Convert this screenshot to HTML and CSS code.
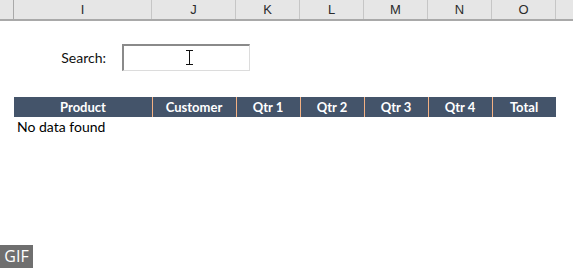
FILE: index.html
```html
<!DOCTYPE html>
<html lang="en">

<head>
    <meta charset="UTF-8">
    <meta name="viewport" content="width=device-width, initial-scale=1.0">
    <title>Search table</title>
    <link rel="stylesheet" href="styles.css">
</head>

<body>

    <div class="col-heads">
        <div class="corner"></div>
        <div>I</div>
        <div>J</div>
        <div>K</div>
        <div>L</div>
        <div>M</div>
        <div>N</div>
        <div>O</div>
        <div></div>
    </div>

    <div class="search-row">
        <label class="search-label" for="search">Search:</label>
        <div class="search-box">
            <input id="search" type="text">
            <span class="ibeam"></span>
        </div>
    </div>

    <div class="table-head">
        <div class="gap"></div>
        <div>Product</div>
        <div>Customer</div>
        <div>Qtr 1</div>
        <div>Qtr 2</div>
        <div>Qtr 3</div>
        <div>Qtr 4</div>
        <div>Total</div>
    </div>
    <p class="empty">No data found</p>

    <div class="gif-badge">GIF</div>

</body>

</html>
```

FILE: styles.css
```css
body {
    margin: 0;
    font-family: Lato, "Open Sans", sans-serif;
    background: #fff;
    color: #000;
    width: 573px;
    height: 271px;
    overflow: hidden;
    position: relative;
}

.col-heads,
.table-head {
    display: grid;
    grid-template-columns: 14px 138px 84px 64px 64px 64px 64px 64px 17px;
}

.col-heads {
    height: 19px;
    background: #e6e6e6;
    border-bottom: 2px solid #a9a9a9;
}

.col-heads div {
    border-right: 1px solid #c6c6c6;
    font-family: "Liberation Sans", sans-serif;
    font-size: 13px;
    line-height: 19px;
    text-align: center;
    color: #2b2b2b;
}

.col-heads .corner {
    border-right-color: #a9a9a9;
}

.col-heads div:last-child {
    border-right: none;
}

.search-row {
    display: flex;
    align-items: center;
    margin-top: 22px;
    height: 28px;
}

.search-label {
    width: 106px;
    text-align: right;
    font-size: 14px;
    color: #111;
}

.search-box {
    position: relative;
    margin-left: 16px;
}

.search-box input {
    display: block;
    box-sizing: border-box;
    width: 128px;
    height: 27px;
    margin: 0;
    border: 1px solid #dcdcdc;
    border-top: 2px solid #8a8a8a;
    border-left: 2px solid #8a8a8a;
    background: #fff;
    outline: none;
}

.ibeam {
    position: absolute;
    left: 64px;
    top: 6px;
    width: 7px;
    height: 15px;
    border-top: 1px solid #111;
    border-bottom: 1px solid #111;
    box-sizing: border-box;
}

.ibeam::after {
    content: "";
    position: absolute;
    left: 3px;
    top: 0;
    width: 1px;
    height: 13px;
    background: #111;
}

.table-head {
    margin-top: 26px;
    height: 20px;
    grid-template-columns: 14px 138px 84px 64px 64px 64px 64px 64px;
}

.table-head div {
    background: #44546a;
    color: #fff;
    font-weight: bold;
    font-size: 13px;
    line-height: 20px;
    text-align: center;
    box-shadow: inset 1px 0 0 #f4b183;
}

.table-head div:nth-child(2) {
    box-shadow: none;
}

.table-head .gap {
    background: transparent;
    box-shadow: none;
}

.empty {
    margin: 1px 0 0 17px;
    font-size: 14px;
    line-height: 18px;
}

.gif-badge {
    position: absolute;
    left: 0;
    top: 245px;
    width: 33px;
    height: 23px;
    background: #6f6f6f;
    color: #fff;
    font-family: "Open Sans", sans-serif;
    font-size: 16px;
    line-height: 23px;
    text-align: center;
}
```
